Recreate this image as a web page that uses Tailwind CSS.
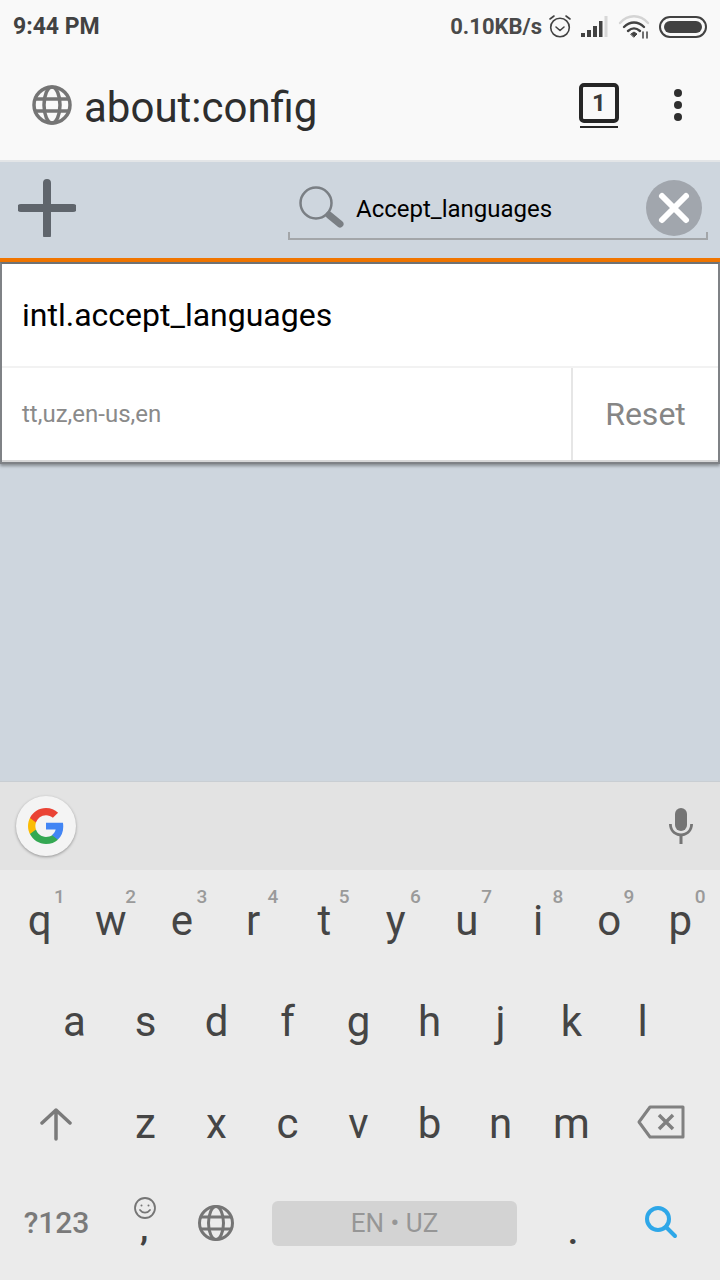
<!DOCTYPE html>
<html lang="en">
<head>
  <meta charset="UTF-8">
  <meta name="viewport" content="width=device-width, initial-scale=1.0">
  <title>about:config</title>
  <script src="https://cdn.jsdelivr.net/npm/@tailwindcss/browser@4"></script>
</head>
<body class="w-[720px] h-[1280px] overflow-hidden flex flex-col bg-[#ced6de] font-[Roboto,sans-serif]">

  <!-- status bar -->
  <div class="h-[52px] shrink-0 bg-[#f9f9f9] flex items-center pl-[13px] pr-[13px] pt-[1px] text-[#424242]">
    <span class="text-[23px] font-bold leading-none">9:44 PM</span>
    <span class="ml-auto text-[22px] font-bold leading-none text-[#4a4a4a]">0.10KB/s</span>
    <svg class="ml-[6px] mb-[1px]" width="24" height="24" viewBox="0 0 24 24" fill="none" stroke="#424242" stroke-width="1.6" stroke-linecap="round" stroke-linejoin="round"><circle cx="12" cy="13.5" r="9.3"/><path d="M8 13l4 3.5 4-3.5M2 5l4-3M22 5l-4-3"/></svg>
    <svg class="ml-[8px]" width="28" height="22" viewBox="0 0 28 22" fill="#424242"><rect x="1" y="17" width="4" height="4"/><rect x="7" y="14" width="4" height="7"/><rect x="13" y="10" width="4" height="11"/><rect x="19" y="5" width="3.5" height="16"/><rect x="24.500" y="0" width="3" height="21" fill="#d8d8d8"/></svg>
    <svg class="ml-[10px]" width="32" height="24" viewBox="0 0 32 24" fill="none" stroke-linecap="round"><path d="M2 8C10-1 22-1 30 8" stroke="#d4d4d4" stroke-width="2.400"/><path d="M6 12c6-6 14-6 20 0" stroke="#424242" stroke-width="2.400"/><path d="M10 16c4-3.500 8-3.500 12 0" stroke="#424242" stroke-width="2.400"/><path d="M13 19l3-2 3 2-3 3z" fill="#424242" stroke="#424242"/><path d="M25 17v6M29 17v6" stroke="#424242" stroke-width="1.500"/></svg>
    <div class="ml-[9px] w-[48px] h-[22px] rounded-full border-2 border-[#424242] p-[3px]">
      <div class="h-full rounded-full bg-[#424242]"></div>
    </div>
  </div>

  <!-- url toolbar -->
  <div class="h-[108px] shrink-0 bg-[#f9f9f9] flex items-center pl-[31px] pb-[2px]">
    <svg width="42" height="42" viewBox="0 0 42 42" fill="none" stroke="#757575" stroke-width="3.500"><circle cx="21" cy="21" r="18"/><ellipse cx="21" cy="21" rx="8" ry="18"/><path d="M4 15h34M4 27h34"/></svg>
    <span class="ml-[11px] pt-[6px] text-[42px] leading-none text-[#2e2e2e]">about:config</span>
    <div class="ml-auto mr-[55px] flex flex-col items-center">
      <div class="w-[40px] h-[40px] rounded-[5px] border-[4px] border-[#262626] flex items-center justify-center text-[24px] font-bold leading-none text-[#3a3a3a]">1</div>
      <div class="w-[38px] h-[2px] mt-[3px] bg-[#262626]"></div>
    </div>
    <div class="mr-[38px] flex flex-col gap-[4px]">
      <div class="w-[8px] h-[8px] rounded-full bg-[#2f2f2f]"></div>
      <div class="w-[8px] h-[8px] rounded-full bg-[#2f2f2f]"></div>
      <div class="w-[8px] h-[8px] rounded-full bg-[#2f2f2f]"></div>
    </div>
  </div>

  <!-- about:config search bar -->
  <div class="h-[98px] shrink-0 border-t-[2px] border-[#e3e5e7] flex items-start bg-[#ced6de]">
    <svg class="ml-[18px] mt-[17px] blur-[0.6px]" width="58" height="58" viewBox="0 0 58 58" fill="none" stroke="#5f656c" stroke-width="8" stroke-linecap="round"><path d="M29 4v52M3 29h52"/></svg>
    <div class="ml-[212px] mt-[14px] w-[420px] h-[64px] relative border-b-[2px] border-[#a3a6a9] flex items-center">
      <div class="absolute left-0 bottom-0 w-[2px] h-[6px] bg-[#a3a6a9]"></div>
      <div class="absolute right-0 bottom-0 w-[2px] h-[6px] bg-[#a3a6a9]"></div>
      <svg class="ml-[10px] mt-[2px]" width="46" height="46" viewBox="0 0 46 46" fill="none" stroke-linecap="round"><circle cx="18" cy="18" r="15.500" stroke="#7a7f84" stroke-width="2.500"/><path d="M31 30l11 9" stroke="#7a7f84" stroke-width="7"/></svg>
      <span class="ml-[12px] mt-[3px] text-[24px] leading-none text-black">Accept_languages</span>
      <div class="absolute right-[6px] top-[4px] w-[56px] h-[56px] rounded-full bg-[#a1a6ad] flex items-center justify-center">
        <svg width="34" height="34" viewBox="0 0 34 34" fill="none" stroke="#ffffff" stroke-width="6" stroke-linecap="round"><path d="M5 5l24 24M29 5L5 29"/></svg>
      </div>
    </div>
  </div>

  <!-- pref card -->
  <div class="h-[206px] shrink-0 relative z-10 border-t-[4px] border-[#f07500] bg-[#ced6de]">
    <div class="h-[202px] border-2 border-t-[2px] border-[#7f8286] border-t-[#6f7275] bg-white flex flex-col shadow-[0_2px_3px_rgba(0,0,0,0.35)]">
      <div class="h-[104px] shrink-0 pl-[20px] flex items-center text-[32px] leading-none text-black border-b-[2px] border-[#f2f2f2]">intl.accept_languages</div>
      <div class="flex-1 flex border-b-[2px] border-[#d8d8d8]">
        <div class="flex-1 pl-[20px] flex items-center text-[24px] leading-none text-[#8a8a8a]">tt,uz,en-us,en</div>
        <div class="w-[147px] border-l-[2px] border-[#e6e6e6] flex items-center justify-center text-[32px] leading-none text-[#868686]">Reset</div>
      </div>
    </div>
  </div>

  <div class="flex-1"></div>

  <!-- keyboard suggestion strip -->
  <div class="h-[89px] shrink-0 bg-[#e3e3e3] border-t-[1px] border-[#c9ced3] flex items-center pl-[16px] pr-[24px] pb-[1px]">
    <div class="w-[60px] h-[60px] rounded-full bg-[#f4f4f4] shadow-[0_1px_3px_rgba(0,0,0,0.35)] flex items-center justify-center">
      <svg width="36" height="36" viewBox="0 0 48 48"><path fill="#4285f4" d="M47 24.500c0-1.600-.1-3.200-.4-4.700H24v9h12.900c-.6 3-2.300 5.500-4.800 7.200v6h7.800C44.400 37.800 47 31.700 47 24.500z"/><path fill="#34a853" d="M24 48c6.500 0 11.900-2.100 15.900-5.800l-7.800-6c-2.100 1.400-4.900 2.300-8.100 2.300-6.200 0-11.500-4.200-13.400-9.900H2.600v6.200C6.500 42.600 14.600 48 24 48z"/><path fill="#fbbc05" d="M10.600 28.600c-.5-1.400-.8-3-.8-4.600s.3-3.200.8-4.600v-6.200H2.600C1 16.400 0 20.100 0 24s1 7.600 2.600 10.800l8-6.200z"/><path fill="#ea4335" d="M24 9.500c3.500 0 6.700 1.200 9.200 3.600l6.900-6.900C35.900 2.400 30.500 0 24 0 14.600 0 6.500 5.400 2.600 13.200l8 6.200C12.500 13.700 17.800 9.500 24 9.500z"/></svg>
    </div>
    <svg class="ml-auto" width="30" height="38" viewBox="0 0 30 38" fill="#757575"><rect x="9" y="1" width="12" height="23" rx="6"/><path d="M3 17h2.800c0 6 4 9.500 9.200 9.500s9.200-3.500 9.200-9.500H27c0 6.500-4.500 11.300-10.500 12.200V37h-3v-7.800C7.500 28.300 3 23.500 3 17z"/></svg>
  </div>

  <!-- keyboard -->
  <div class="h-[410px] shrink-0 bg-[#ebebeb] text-[#454545] flex flex-col">
    <div class="h-[102px] grid grid-cols-10 px-[4px]">
      <div class="relative flex items-center justify-center text-[42px] leading-none">q<span class="absolute left-[50px] top-[17px] text-[19px] font-medium text-[#9a9a9a]">1</span></div>
      <div class="relative flex items-center justify-center text-[42px] leading-none">w<span class="absolute left-[50px] top-[17px] text-[19px] font-medium text-[#9a9a9a]">2</span></div>
      <div class="relative flex items-center justify-center text-[42px] leading-none">e<span class="absolute left-[50px] top-[17px] text-[19px] font-medium text-[#9a9a9a]">3</span></div>
      <div class="relative flex items-center justify-center text-[42px] leading-none">r<span class="absolute left-[50px] top-[17px] text-[19px] font-medium text-[#9a9a9a]">4</span></div>
      <div class="relative flex items-center justify-center text-[42px] leading-none">t<span class="absolute left-[50px] top-[17px] text-[19px] font-medium text-[#9a9a9a]">5</span></div>
      <div class="relative flex items-center justify-center text-[42px] leading-none">y<span class="absolute left-[50px] top-[17px] text-[19px] font-medium text-[#9a9a9a]">6</span></div>
      <div class="relative flex items-center justify-center text-[42px] leading-none">u<span class="absolute left-[50px] top-[17px] text-[19px] font-medium text-[#9a9a9a]">7</span></div>
      <div class="relative flex items-center justify-center text-[42px] leading-none">i<span class="absolute left-[50px] top-[17px] text-[19px] font-medium text-[#9a9a9a]">8</span></div>
      <div class="relative flex items-center justify-center text-[42px] leading-none">o<span class="absolute left-[50px] top-[17px] text-[19px] font-medium text-[#9a9a9a]">9</span></div>
      <div class="relative flex items-center justify-center text-[42px] leading-none">p<span class="absolute left-[50px] top-[17px] text-[19px] font-medium text-[#9a9a9a]">0</span></div>
    </div>
    <div class="h-[102px] flex pl-[39px] text-[42px] leading-none">
      <div class="w-[71px] flex items-center justify-center pb-[2px]">a</div>
      <div class="w-[71px] flex items-center justify-center pb-[2px]">s</div>
      <div class="w-[71px] flex items-center justify-center pb-[2px]">d</div>
      <div class="w-[71px] flex items-center justify-center pb-[2px]">f</div>
      <div class="w-[71px] flex items-center justify-center pb-[2px]">g</div>
      <div class="w-[71px] flex items-center justify-center pb-[2px]">h</div>
      <div class="w-[71px] flex items-center justify-center pb-[2px]">j</div>
      <div class="w-[71px] flex items-center justify-center pb-[2px]">k</div>
      <div class="w-[71px] flex items-center justify-center pb-[2px]">l</div>
    </div>
    <div class="h-[102px] flex text-[42px] leading-none">
      <div class="w-[110px] flex items-center justify-center pb-[2px] pl-[2px]">
        <svg width="32" height="34" viewBox="0 0 32 34" fill="none" stroke="#7a7a7a" stroke-width="3.500" stroke-linecap="round" stroke-linejoin="round"><path d="M16 32V3M2 16L16 3l14 13"/></svg>
      </div>
      <div class="w-[71px] flex items-center justify-center pb-[3px]">z</div>
      <div class="w-[71px] flex items-center justify-center pb-[3px]">x</div>
      <div class="w-[71px] flex items-center justify-center pb-[3px]">c</div>
      <div class="w-[71px] flex items-center justify-center pb-[3px]">v</div>
      <div class="w-[71px] flex items-center justify-center pb-[3px]">b</div>
      <div class="w-[71px] flex items-center justify-center pb-[3px]">n</div>
      <div class="w-[71px] flex items-center justify-center pb-[3px]">m</div>
      <div class="flex-1 flex items-center justify-center pb-[6px] pr-[5px]">
        <svg width="48" height="34" viewBox="0 0 48 34" fill="none" stroke="#808080" stroke-width="3" stroke-linejoin="round"><path d="M13 2h33v30H13L2 17z"/><path d="M22 10l14 14M36 10L22 24" stroke-width="3.500"/></svg>
      </div>
    </div>
    <div class="h-[104px] flex items-start">
      <div class="w-[113px] h-[92px] flex items-center justify-center pt-[2px] text-[30px] font-medium leading-none text-[#7a7a7a]">?123</div>
      <div class="w-[64px] h-[92px] relative flex items-center justify-center">
        <svg class="absolute top-[20px] left-[20px]" width="24" height="24" viewBox="0 0 24 24" fill="none" stroke="#757575" stroke-width="1.800" stroke-linecap="round"><circle cx="12" cy="12" r="10"/><path d="M7 14c2.500 3.500 7.500 3.500 10 0"/><circle cx="8.500" cy="9.500" r="1" fill="#757575" stroke="none"/><circle cx="15.500" cy="9.500" r="1" fill="#757575" stroke="none"/></svg>
        <span class="absolute top-[35px] left-[27px] text-[34px] font-bold leading-none text-[#424242]">,</span>
      </div>
      <div class="w-[78px] h-[92px] flex items-center justify-center pt-[1px]">
        <svg width="38" height="38" viewBox="0 0 38 38" fill="none" stroke="#757575" stroke-width="3"><circle cx="19" cy="19" r="16.500"/><ellipse cx="19" cy="19" rx="7.500" ry="16.500"/><path d="M4 13h30M4 25h30"/></svg>
      </div>
      <div class="w-[245px] h-[45px] mt-[25px] ml-[17px] pb-[1px] rounded-[6px] bg-[#d3d3d3] flex items-center justify-center text-[26px] leading-none text-[#969696]">EN • UZ</div>
      <div class="w-[112px] h-[92px] flex items-center justify-center text-[34px] font-bold leading-none text-[#424242]"><span class="pt-[20px]">.</span></div>
      <div class="flex-1 h-[92px] flex items-center justify-start pl-[15px]">
        <svg width="34" height="34" viewBox="0 0 34 34" fill="none" stroke="#2ea7e8" stroke-width="4" stroke-linecap="round"><circle cx="14" cy="14" r="11"/><path d="M22 22l9 9"/></svg>
      </div>
    </div>
  </div>
</body>
</html>
